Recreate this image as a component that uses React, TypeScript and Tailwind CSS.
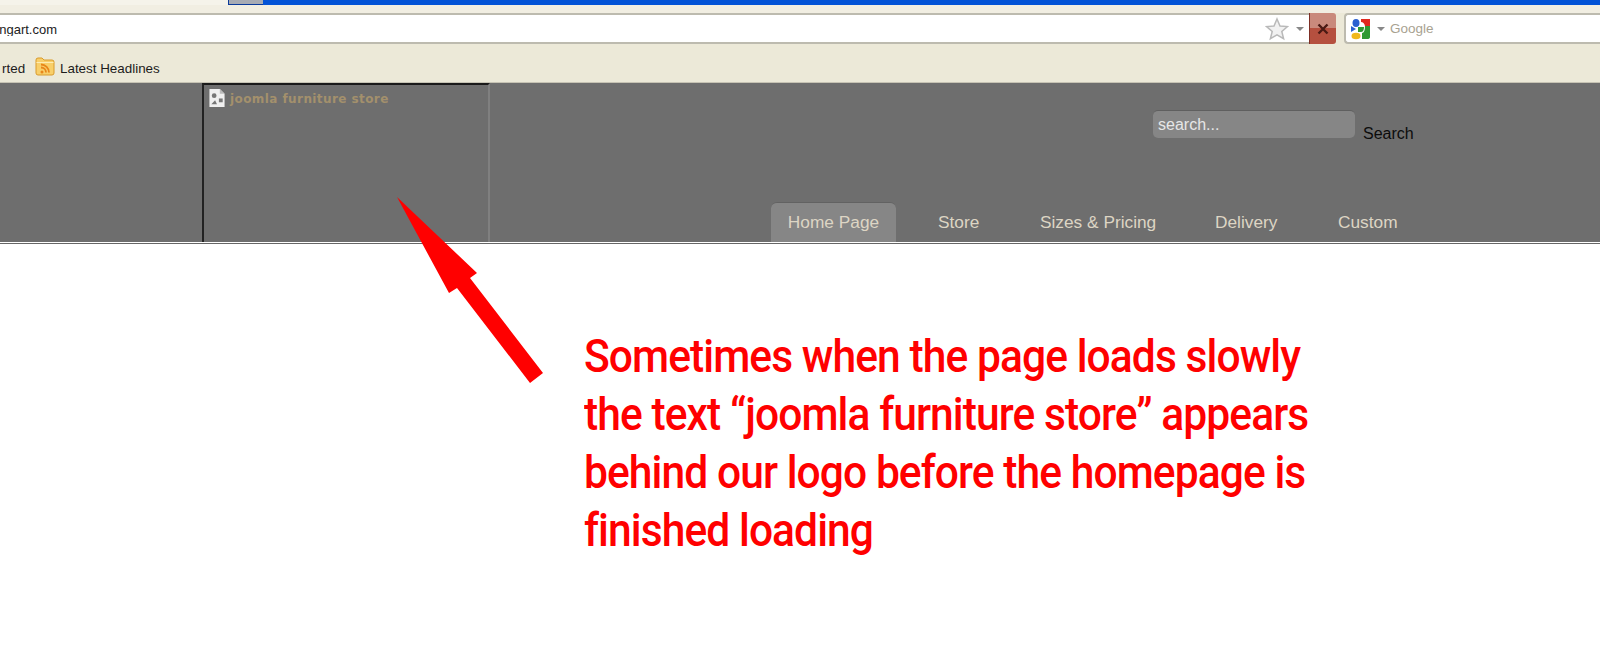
import React from "react";

const NAV = [
  { label: "Store", className: "w-[143px] pl-[42px]" },
  { label: "Sizes & Pricing", className: "w-[176px] pl-[1px]" },
  { label: "Delivery", className: "w-[123px] pl-[0px]" },
  { label: "Custom", className: "w-[80px] pl-0" },
];

function RssFolder() {
  return (
    <svg width="20" height="19" viewBox="0 0 20 19">
      <path d="M1 3q0-2 2-2h4l2 2h8q2 0 2 2v11q0 2-2 2H3q-2 0-2-2z" fill="#f8cf6a" stroke="#d99a2b" />
      <path d="M1.500 5.500h17" stroke="#fdecb4" />
      <circle cx="7" cy="15" r="1.500" fill="#e8861a" />
      <path d="M6 10.500a5 5 0 0 1 5 5M6 7.500a8 8 0 0 1 8 8" fill="none" stroke="#e8861a" strokeWidth="1.800" />
    </svg>
  );
}

function GoogleIcon() {
  return (
    <svg width="22" height="22" viewBox="0 0 22 22">
      <ellipse cx="6" cy="5" rx="3.500" ry="4" fill="#2a5fd0" />
      <path d="M11 1h9v7h-5q-1-4-4-4z" fill="#e0281e" />
      <path d="M1 8l5 3-5 3z" fill="#2a5fd0" />
      <path d="M20 8v11q0 2-3 2h-5v-6q3 0 3-7z" fill="#2f9a32" />
      <path d="M8 9h6q0 5-3 5H8z" fill="#2f9a32" />
      <ellipse cx="6" cy="18" rx="4.500" ry="3.300" fill="#f0b81c" />
    </svg>
  );
}

export default function App() {
  return (
    <div className="relative h-[646px] w-[1600px] overflow-hidden bg-white font-['Liberation_Sans',sans-serif]">
      {/* browser chrome */}
      <div className="flex h-[5px] bg-[#f5f3ea]">
        <div className="w-[228px]" />
        <div className="w-[35px] border-b border-l border-[#0b3a9a] bg-[#a7abb4]" />
        <div className="flex-1 bg-[#0353d6]" />
      </div>
      <div className="h-[8px] bg-[#f1eee2]" />
      <div className="flex h-[31px] bg-[#ece9d8]">
        <div className="flex h-full flex-1 items-center justify-between border-y-2 border-[#bdbbaf] bg-white">
          <span className="mt-[2px] w-[57px] overflow-hidden whitespace-nowrap text-[13px] leading-none text-[#222] [direction:rtl]">ngart.com</span>
          <div className="flex h-full items-center">
            <svg width="24" height="24" viewBox="0 0 24 24" className="mr-[7px]">
              <path d="M12 2l3 7 7.500.6-5.700 4.800 1.800 7.300L12 17.800 5.400 21.700l1.800-7.300L1.500 9.600 9 9z" fill="#f1f1f1" stroke="#b9b9b9" strokeWidth="1.500" />
            </svg>
            <div className="mr-[5px] h-0 w-0 border-x-[4px] border-t-[4px] border-x-transparent border-t-[#888]" />
          </div>
        </div>
        <div className="flex h-full w-[27px] items-center justify-center rounded-r-[3px] border-l border-[#7d2f25] bg-gradient-to-b from-[#c98a7c] from-50% to-[#b5503f] to-50% text-[#4a1a14]">
          <svg width="12" height="12" viewBox="0 0 12 12">
            <path d="M1.500 1.500l9 9M10.500 1.500l-9 9" stroke="#4a1a14" strokeWidth="2.400" />
          </svg>
        </div>
        <div className="w-[8px]" />
        <div className="flex h-full w-[256px] items-center rounded-l-[4px] border-y-2 border-l-2 border-[#bdbbaf] bg-white pl-[4px]">
          <GoogleIcon />
          <div className="ml-[5px] h-0 w-0 border-x-[4px] border-t-[4px] border-x-transparent border-t-[#888]" />
          <span className="ml-[5px] mt-[2px] text-[13.5px] text-[#a8a291]">Google</span>
        </div>
      </div>
      <div className="flex h-[39px] items-start border-b border-[#c6c3b4] bg-[#ece9d8] pt-[13px] text-[13.4px] leading-[19px] text-[#1c1c1c]">
        <span className="mt-[2px] w-[27px] whitespace-nowrap pl-[2px]">rted</span>
        <div className="ml-[8px] mr-[5px] flex">
          <RssFolder />
        </div>
        <span className="mt-[2px]">Latest Headlines</span>
      </div>

      {/* site header */}
      <header className="flex h-[159px] bg-[#6e6e6e]">
        <div className="w-[202px]" />
        <div className="flex w-[288px] items-start border-x-2 border-t-2 border-t-[#1a1a1a] border-r-[#808080] border-l-[#222] pl-[5px] pt-[4px]">
          <svg width="16" height="18" viewBox="0 0 16 19">
            <path d="M0 0h11l5 5v14H0z" fill="#f0f0f0" />
            <path d="M11 0v5h5" fill="#bbb" />
            <circle cx="5" cy="7" r="2.500" fill="#777" />
            <path d="M2 16l4-4 2 4z" fill="#777" />
            <rect x="10" y="10" width="4" height="4" fill="#777" />
          </svg>
          <span className="ml-[5px] mt-[1px] font-['DejaVu_Sans',sans-serif] text-[12px] font-bold leading-[18px] tracking-[0.42px] text-[#a3906c]">joomla furniture store</span>
        </div>
        <div className="flex flex-1 flex-col justify-between">
          <div className="flex items-start pl-[663px] pt-[27px]">
            <div className="flex h-[28px] w-[202px] items-center rounded-[5px] border-t border-[#5f5f5f] bg-[#868686] pl-[5px] pt-[1px] text-[16px] text-[#e6e6e6]">search...</div>
            <span className="ml-[8px] mt-[15px] text-[16px] leading-[17px] text-[#0c0c0c]">Search</span>
          </div>
          <nav className="flex items-end pl-[281px]">
            <div className="flex h-[40px] w-[125px] items-center justify-center rounded-t-[6px] border-t border-[#626262] bg-[#868686] pt-[1px] text-[17.3px] text-[#ddd5c4]">Home Page</div>
            {NAV.map((item) => (
              <div key={item.label} className={`flex h-[40px] items-center whitespace-nowrap pt-[1px] text-[17.3px] text-[#ddd5c4] ${item.className}`}>
                {item.label}
              </div>
            ))}
          </nav>
        </div>
      </header>
      <div className="h-[1px] bg-white" />
      <div className="h-[1px] bg-[#666]" />

      {/* annotation */}
      <div className="pl-[584px] pt-[83px]">
        <div className="origin-left scale-x-[0.925] font-['Roboto',sans-serif] text-[46px] font-medium leading-[58px] tracking-[-1px] whitespace-nowrap text-[#ff0000]">
          <div>Sometimes when the page loads slowly</div>
          <div>the text “joomla furniture store” appears</div>
          <div>behind our logo before the homepage is</div>
          <div>finished loading</div>
        </div>
      </div>

      <svg width="1600" height="646" viewBox="0 0 1600 646" className="pointer-events-none absolute left-0 top-0">
        <polygon points="397,197 477,273 470,278 543,373 530,383 457,288 449,293" fill="#ff0000" />
      </svg>
    </div>
  );
}
